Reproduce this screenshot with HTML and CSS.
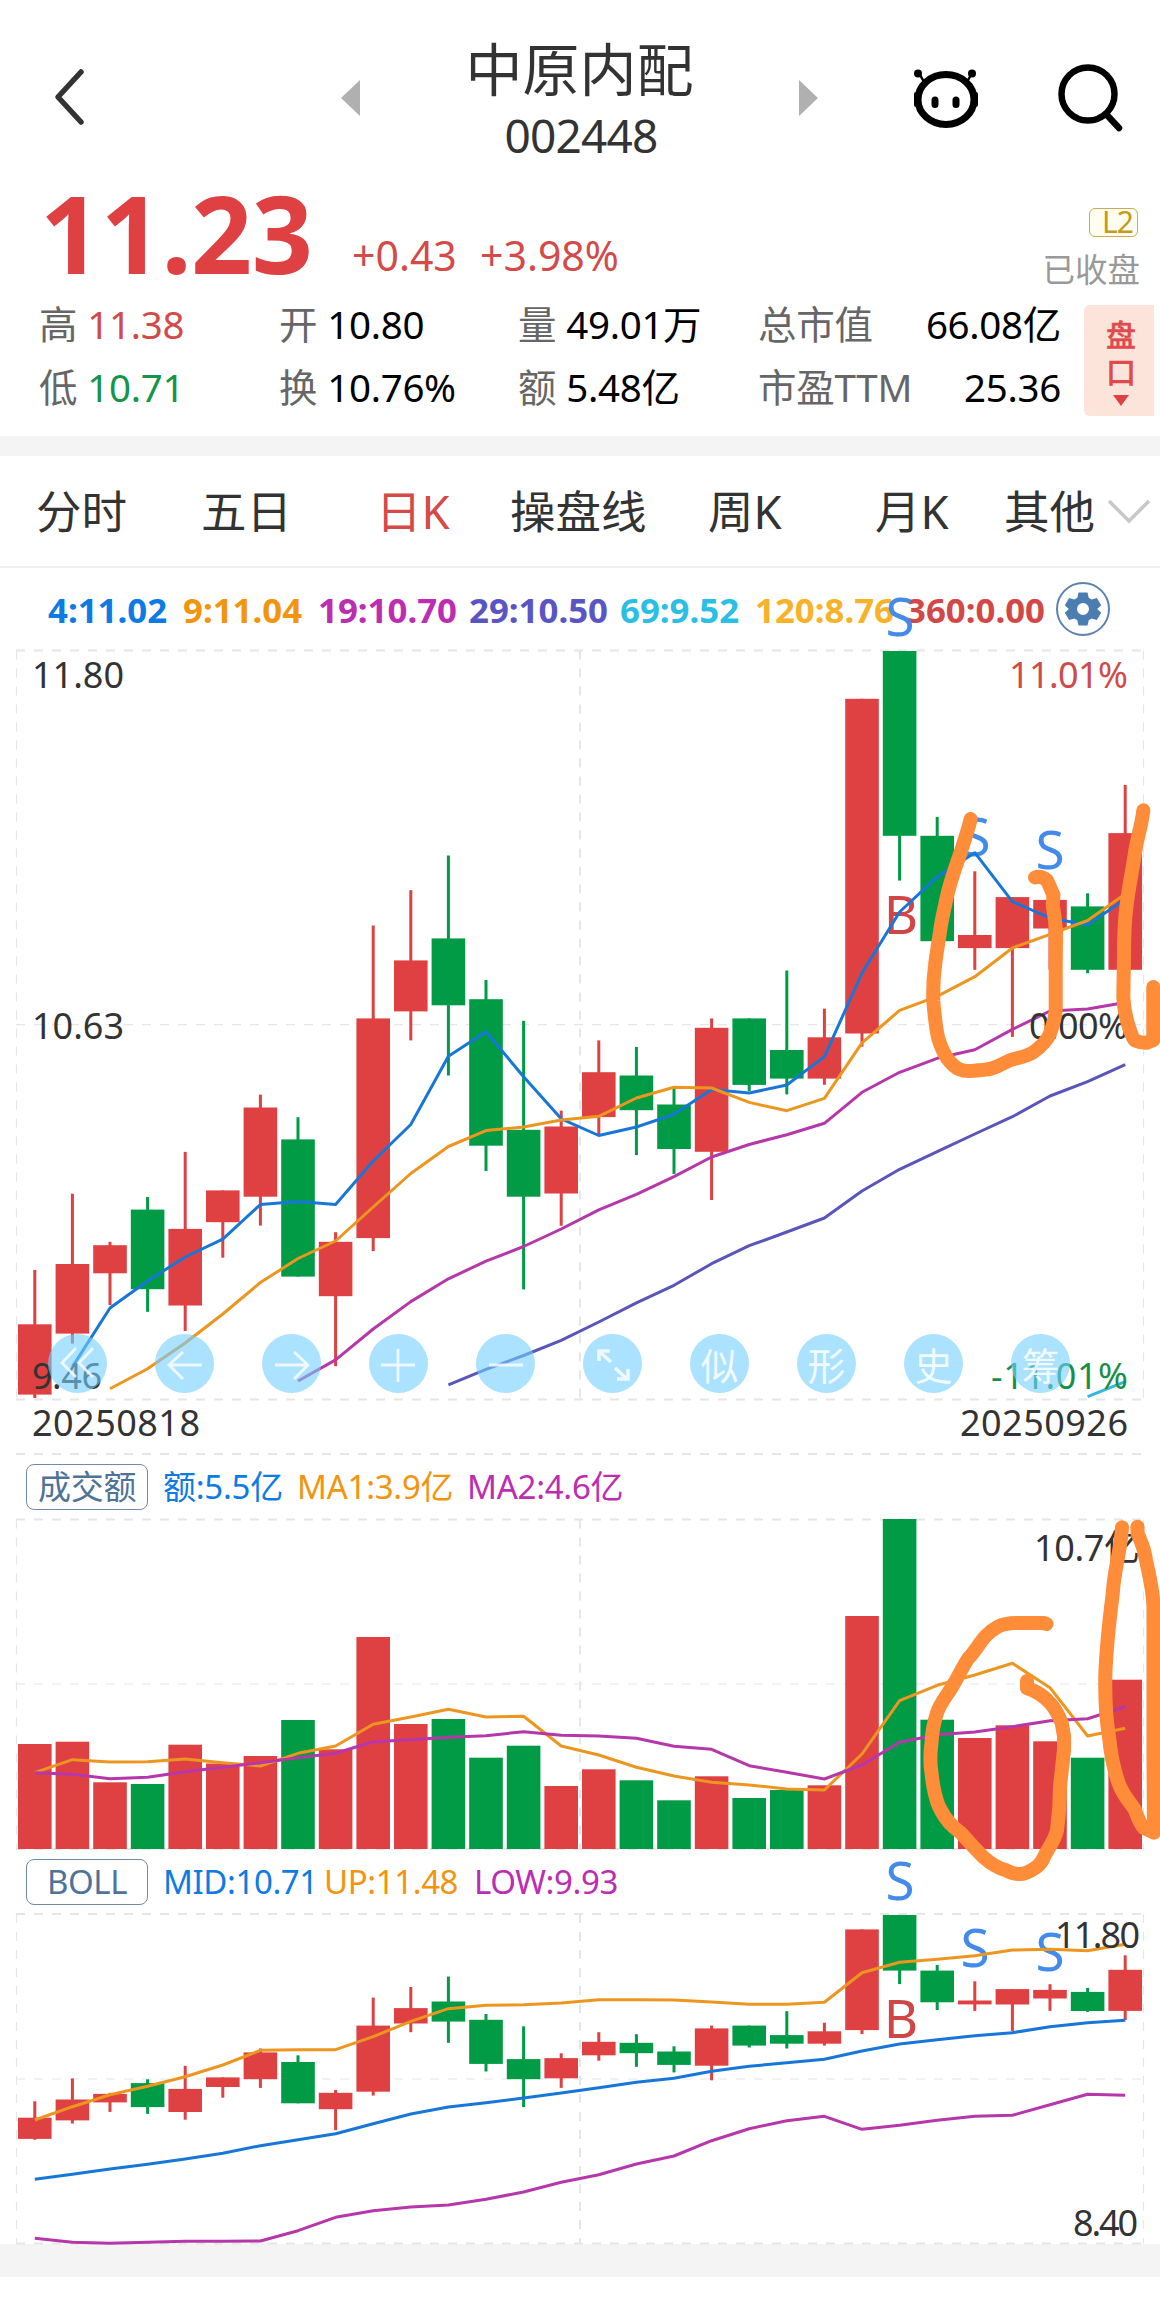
FILE: index.html
```html
<!DOCTYPE html>
<html lang="zh-CN">
<head>
<meta charset="utf-8">
<title>中原内配 002448</title>
<link rel="stylesheet" href="styles.css">
</head>
<body>
<main class="app">
  <header class="top">
    <svg class="back" viewBox="0 0 40 60"><path d="M31 6 8 31l23 25"/></svg>
    <svg class="tri prev" viewBox="0 0 20 38"><path d="M20 1v36L1 19z"/></svg>
    <div class="title"><h1>中原内配</h1><p>002448</p></div>
    <svg class="tri next" viewBox="0 0 20 38"><path d="M0 1v36l19-18z"/></svg>
    <svg class="robot" viewBox="0 0 70 64">
      <ellipse cx="35" cy="35.500" rx="28" ry="25"/>
      <path d="M8 9l5 9M61 9l-5 9"/>
      <path class="ears" d="M5 30v11M65 30v11"/>
      <circle class="solid" cx="7" cy="9.500" r="4"/><circle class="solid" cx="61" cy="9.500" r="4"/>
      <path class="eyes" d="M24 36v4.500M45 36v4.500"/>
    </svg>
    <svg class="search" viewBox="0 0 70 72"><circle cx="32" cy="31" r="26.500"/><path d="M50 51l13 14"/></svg>
  </header>

  <section class="quote">
    <div class="price-row">
      <strong class="price">11.23</strong>
      <span class="change">+0.43</span><span class="change">+3.98%</span>
      <div class="state"><span class="l2">L2</span><span class="closed">已收盘</span></div>
    </div>
    <div class="stats-row">
      <dl class="stats">
        <div><dt>高</dt><dd class="up">11.38</dd></div>
        <div><dt>开</dt><dd>10.80</dd></div>
        <div><dt>量</dt><dd>49.01万</dd></div>
        <div class="wide"><dt>总市值</dt><dd>66.08亿</dd></div>
        <div><dt>低</dt><dd class="down">10.71</dd></div>
        <div><dt>换</dt><dd>10.76%</dd></div>
        <div><dt>额</dt><dd>5.48亿</dd></div>
        <div class="wide"><dt>市盈TTM</dt><dd>25.36</dd></div>
      </dl>
      <div class="book"><span>盘</span><span>口</span><svg viewBox="0 0 16 11"><path d="M0 0h16L8 11z"/></svg></div>
    </div>
  </section>

  <div class="band"></div>

  <nav class="tabs">
    <a>分时</a><a>五日</a><a class="active">日K</a><a>操盘线</a><a>周K</a><a>月K</a><a>其他</a>
    <svg viewBox="0 0 44 28"><path d="M2 3l20 20L42 3"/></svg>
  </nav>

  <div class="ma">
    <span class="c-blue">4:11.02</span><span class="c-orange">9:11.04</span><span class="c-pink">19:10.70</span><span class="c-violet">29:10.50</span><span class="c-cyan">69:9.52</span><span class="c-yellow">120:8.76</span><span class="c-red">360:0.00</span>
    <svg class="gear" viewBox="0 0 56 56">
      <circle class="ring" cx="28" cy="28" r="26"/>
      <path fill-rule="evenodd" d="M23.500 11.500h9l1.200 5.300 3 1.700 5.200-1.600 4.300 7.400-4 3.700 4 3.700-4.300 7.400-5.200-1.600-3 1.700-1.200 5.300h-9l-1.200-5.300-3-1.700-5.200 1.600-4.300-7.400 4-3.700-4-3.700 4.300-7.400 5.200 1.600 3-1.700zM28 22a6 6 0 1 0 0 12 6 6 0 0 0 0-12z"/>
    </svg>
  </div>

  <section class="kline">
    <svg class="chart" id="kline" viewBox="0 650 1160 804"></svg>
    <nav class="tools">
      <button><svg viewBox="0 0 40 40"><path d="M18 4 4 19l14 14M35 4 21 19l14 14"/></svg></button>
      <button><svg viewBox="0 0 40 40"><path d="M18 8 4 21l14 14M4 21h33"/></svg></button>
      <button><svg viewBox="0 0 40 40"><path d="M22 8l14 13-14 14M36 21H3"/></svg></button>
      <button><svg viewBox="0 0 40 40"><path d="M19 5v33M2 21h34"/></svg></button>
      <button><svg viewBox="0 0 40 40"><path d="M3 21h34"/></svg></button>
      <button><svg class="bold" viewBox="0 0 40 40"><path d="M18 18 7 8M6 17V7h11M22 24l12 11M35 25v10H24"/></svg></button>
      <button>似</button><button>形</button><button>史</button><button>筹</button>
    </nav>
  </section>

  <div class="legend">
    <span class="tag">成交额</span><span class="c-blue w1">额:5.5亿</span><span class="c-orange w2">MA1:3.9亿</span><span class="c-pink">MA2:4.6亿</span>
  </div>
  <svg class="chart" id="volume" viewBox="0 1519 1160 330"></svg>

  <div class="legend boll">
    <span class="tag">BOLL</span><span class="c-blue b1">MID:10.71</span><span class="c-orange b2">UP:11.48</span><span class="c-pink">LOW:9.93</span>
  </div>
  <svg class="chart" id="boll" viewBox="0 1914 1160 330"></svg>
  <footer class="foot"></footer>

  <svg class="ink" viewBox="0 0 1160 2315">
    <path d="M970.700 819C967 834 962 848 958 860C952 877 949 887 946.700 897.500C943 915 941 922 940 932C938 945 936 956 935 966C933 980 933 990 933.300 1001C935 1020 936 1029 938.300 1038.700C941 1047 943 1052 946.700 1057.600C952 1065 956 1068 960 1069.600C966 1072 970 1071 974 1070.700C982 1070 988 1070 993 1068C1002 1065 1006 1061 1013 1059.300C1022 1057 1027 1056 1033 1052.400C1042 1046 1047 1041 1050 1033.500C1053 1025 1056 1016 1055.700 1007.700V966L1056 932C1055 920 1054 911 1052.700 906L1053.500 895C1050 888 1049 884 1046.700 880C1043 877 1039 876 1035 877.500"/>
    <path d="M1143.300 810.300C1142 824 1137 838 1135 852.700C1132 873 1129 886 1126.700 904.300C1124 924 1124 938 1124 956L1123.300 997.300C1124 1009 1126 1018 1128.300 1025C1131 1033 1132 1038 1135 1040.400C1139 1042 1143 1043 1146.700 1042.800L1153.300 1040V987"/>
    <path d="M1046.500 1624L1044 1623H1016.500C1008 1623 1003 1624 998 1626.700C990 1631 988 1634 985 1636.700C978 1645 974 1653 968.500 1658C962 1668 958 1677 953.700 1684C947 1696 940 1703 937 1713C933 1725 932 1732 931.500 1743C930 1754 930 1764 931.500 1773C933 1788 935 1797 939 1806.700C946 1821 953 1827 961 1833C970 1843 976 1850 983 1856.700C992 1865 998 1868 1005.500 1870C1012 1874 1016 1874 1020 1874C1027 1874 1032 1870 1037 1866.700C1043 1862 1043 1858 1046 1853C1052 1843 1056 1837 1057 1830C1059 1815 1060 1800 1060 1786.700L1064 1750V1736L1061.700 1723C1058 1714 1054 1707 1050 1703C1044 1696 1036 1691 1027 1688V1681"/>
    <path d="M1122 1527.300C1121 1550 1114 1570 1112.800 1593C1109 1623 1106 1650 1105.300 1676.700C1105 1698 1106 1719 1109 1736.700C1111 1757 1115 1774 1120 1786.700C1125 1798 1130 1802 1135 1810C1138 1819 1141 1825 1144 1828L1154 1832.700L1153.500 1760V1606.700C1153 1589 1149 1575 1146 1560C1144 1546 1140 1540 1137.500 1533V1526.700"/>
  </svg>
</main>
<script src="charts.js"></script>
</body>
</html>
```
FILE: styles.css
```css
* { box-sizing: border-box; }
body {
  margin: 0;
  background: #fff;
  color: #333;
  font-family: "Noto Sans", "Noto Sans CJK SC", sans-serif;
}
h1, p, dl, dd { margin: 0; font-weight: 400; }
svg { display: block; flex: none; }
.app { position: relative; width: 1160px; height: 2315px; overflow: hidden; }

.top { display: flex; align-items: flex-start; height: 180px; }
.back { width: 40px; height: 60px; margin: 66px 0 0 50px; fill: none; stroke: #333; stroke-width: 5.500; stroke-linecap: round; stroke-linejoin: round; }
.tri { width: 20px; height: 38px; margin-top: 79px; fill: #b0b0b0; }
.prev { margin-left: 250px; }
.title { width: 439px; padding-top: 36px; text-align: center; }
.title h1 { font-size: 57px; line-height: 66px; }
.title p { margin-top: 2px; font-size: 46px; line-height: 62px; letter-spacing: -.8px; text-indent: 3px; }
.robot { width: 70px; height: 64px; margin: 64px 0 0 92px; fill: none; stroke: #000; stroke-width: 7; }
.robot .solid { fill: #000; stroke: none; }
.robot path { stroke-width: 2.500; }
.robot .ears { stroke-width: 4; stroke-linecap: round; }
.robot .eyes { stroke-width: 7; stroke-linecap: round; }
.search { width: 70px; height: 72px; margin: 63px 0 0 75px; fill: none; stroke: #000; stroke-width: 6.500; stroke-linecap: round; }

.price-row { display: flex; height: 114px; padding-left: 40px; }
.price { width: 312px; margin-top: -2px; font-size: 107px; line-height: 110px; letter-spacing: -.5px; color: #df4143; }
.change { width: 128px; margin-top: 45px; font-size: 41px; line-height: 60px; color: #d34a48; }
.state { display: flex; flex-direction: column; align-items: flex-end; flex: 1; padding: 28px 20px 0 0; }
.l2 { width: 49px; height: 34px; margin-right: 2px; padding-right: 4px; border: 1.500px solid #c7ac50; border-radius: 6px; background: #fffdf0; font-size: 30px; line-height: 26px; letter-spacing: -1px; text-align: right; color: #c29a1c; }
.closed { margin-top: 9px; font-size: 32.500px; line-height: 48px; color: #999; }
.stats-row { display: flex; justify-content: space-between; height: 142px; padding: 0 6px 0 39px; }
.stats { display: grid; grid-template-columns: 240px 239px 240px 303px; grid-template-rows: 63px 63px; margin-top: -1px; font-size: 38.500px; line-height: 63px; letter-spacing: -.3px; color: #000; }
.stats div { display: flex; gap: 10px; }
.stats .wide { justify-content: space-between; }
.stats dt { color: #666; }
.stats .up { color: #d34a48; }
.stats .down { color: #14954a; }
.book { display: flex; flex-direction: column; align-items: center; width: 70px; height: 111px; margin-top: 11px; padding: 11px 0 0 4px; border-radius: 6px 0 0 6px; background: #fde4da; color: #df4b4b; font-size: 30px; font-weight: 500; line-height: 37px; -webkit-text-stroke: .4px #df4b4b; }
.book svg { width: 16px; height: 11px; margin-top: 5px; fill: #df4143; }

.band { height: 20px; background: #f4f4f4; }
.tabs { display: flex; height: 112px; padding-left: 36px; border-bottom: 2px solid #f0f0f0; font-size: 45.500px; line-height: 111px; }
.tabs a { width: 165px; white-space: nowrap; }
.tabs a:nth-child(2) { width: 175px; }
.tabs a:nth-child(3) { width: 134px; }
.tabs a:nth-child(4) { width: 198px; }
.tabs a:nth-child(5) { width: 167px; }
.tabs a:nth-child(6) { width: 129px; }
.tabs a:nth-child(7) { width: 103px; }
.tabs .active { color: #d34a48; }
.tabs svg { width: 44px; height: 28px; margin-top: 42px; fill: none; stroke: #c8c8cc; stroke-width: 3.500; }

.ma { display: flex; height: 82px; padding-left: 48px; font-size: 34.800px; font-weight: 700; line-height: 83px; }
.ma span { width: 135px; white-space: nowrap; }
.ma span:nth-child(3), .ma span:nth-child(4) { width: 151px; }
.ma span:nth-child(6) { width: 151px; }
.ma span:nth-child(7) { width: 149px; }
.gear { width: 56px; height: 56px; margin-top: 13px; fill: #4c7db2; }
.gear .ring { fill: none; stroke: #5c83ad; stroke-width: 2; }

.c-blue { color: #0d7be3; }
.c-orange { color: #f3940f; }
.c-pink { color: #bd2db1; }
.c-violet { color: #5a55c4; }
.c-cyan { color: #2bbfe5; }
.c-yellow { color: #f8b22a; }
.c-red { color: #d34747; }

.chart { width: 1160px; overflow: visible; }
.kline { position: relative; height: 804px; }
.tools { position: absolute; top: 684px; left: 48px; display: flex; gap: 48px; }
.tools button { display: flex; align-items: center; justify-content: center; width: 59px; height: 59px; padding: 0; border: 0; border-radius: 50%; background: rgba(115, 207, 255, .6); color: rgba(255, 255, 255, .85); font: 38px/59px "Noto Sans CJK SC", sans-serif; }
.tools svg { width: 40px; height: 40px; fill: none; stroke: rgba(255, 255, 255, .8); stroke-width: 2.800; }
.tools .bold { stroke-width: 3.500; }

.legend { display: flex; align-items: center; height: 65px; padding: 1px 0 0 26px; font-size: 33px; line-height: 46px; letter-spacing: -.25px; white-space: nowrap; }
.boll { letter-spacing: -.4px; }
.tag { width: 122px; height: 46px; margin-right: 15px; border: 1.500px solid #6f8ba6; border-radius: 8px; line-height: 43px; text-align: center; color: #4f7396; }
.w1 { width: 134px; }
.w2 { width: 170px; }
.b1 { width: 161px; }
.b2 { width: 150px; }
.foot { height: 33px; background: #f4f4f4; }

.grid { fill: none; stroke: #e6e6e6; stroke-width: 2; stroke-dasharray: 9 9; }
.thin { stroke-width: 1.200; }
.rise { fill: #df4143; }
.fall { fill: #029b45; }
.line { fill: none; stroke-width: 3; stroke-linejoin: round; }
.s-blue { stroke: #1777d8; }
.s-orange { stroke: #ed961f; }
.s-pink { stroke: #b637aa; }
.s-violet { stroke: #5856bb; }
.s-cyan { stroke: #35b8dc; }
.axis { font-size: 36px; fill: #333; }
.axis.up { fill: #cf4a4a; }
.axis.down { fill: #178f4a; }
.mark { font-size: 53px; text-anchor: middle; }
.sell { fill: #438bea; }
.buy { fill: #d04545; }
.ink { position: absolute; top: 0; left: 0; width: 1160px; height: 2315px; pointer-events: none; fill: none; stroke: #ff8c39; stroke-width: 14; stroke-linecap: round; stroke-linejoin: round; }
```
FILE: charts.js
```js
const X0 = 34.8, STEP = 37.6, BAR = 33.6;
const cx = i => X0 + i * STEP;

// high, body top, body bottom, low, direction (1 = rise)
const candles = [
  [1270,1324.3,1394.6,1398,1],[1193.7,1264,1333.6,1343.6,1],[1241.8,1245.2,1273.3,1305.1,1],
  [1197,1209.6,1289.2,1311.8,0],[1151.9,1228.9,1305.5,1331,1],[1190.4,1190.4,1222.2,1257.7,1],
  [1094.6,1107.5,1196.7,1225.6,1],[1117.2,1139.4,1276.6,1276.6,0],[1232.2,1241.8,1296.2,1366.2,1],
  [925.5,1018.4,1238.1,1251.1,1],[890.2,960.4,1011.4,1040.4,1],[855.5,938.4,1005.3,1075.5,0],
  [980,999.2,1145.7,1171,0],[1020.8,1129.8,1196.7,1289.4,0],[1110.6,1126.5,1193.5,1225.7,1],
  [1040.4,1072.2,1117.1,1135,1],[1046.9,1075.5,1110.2,1155.1,0],[1087.3,1104.5,1149,1173.9,0],
  [1018.4,1027.8,1151.8,1200,1],[1018.4,1018.4,1084.9,1091,0],[970.5,1050,1078.6,1094.4,0],
  [1008.7,1037.3,1078.6,1084.8,1],[698.8,698.8,1033.5,1046.6,1],[651,651,835.8,880.6,0],
  [816.9,835.8,941.2,966.6,0],[871.3,935,948.1,969.8,1],[897.1,897.1,948.1,1036.9,1],
  [881,899.9,928.5,969.8,1],[893.3,906.4,969.8,973.2,0],[784.9,833.1,969.8,1000,1]
];
const volumeTops = [1744,1741.7,1782.3,1784,1744.7,1763.5,1756,1720,1749.3,1637,1724,1719,1757.7,1745.7,1786,1769.3,1780.3,1800.3,1776.3,1798,1790,1785.3,1616,1519,1719.7,1738,1725.3,1741.3,1757.7,1679.7];

const lines = {
  ma4: [1366.9,1308,1281,1257,1239.2,1204.5,1201.5,1204.5,1161,1124.5,1056.3,1031.8,1076.7,1118.8,1135.5,1127,1114.3,1089.4,1093,1085,1056.6,973,912,876.8,852.7,901.6,918,925,899],
  ma9: [1388.7,1368.7,1343,1314,1282.5,1258.5,1241,1207,1173.5,1146.5,1130.6,1127,1120,1116.3,1098,1087.3,1088,1102.4,1110.7,1098.3,1042.8,1010.4,996.3,976.7,948,934.3,920.5,894],
  ma19: [1381,1359.9,1329,1301.6,1278.8,1261.2,1246.5,1229,1209.8,1194.3,1176.7,1157,1144.5,1134.7,1123.3,1092.3,1072.3,1058.3,1049.7,1029.4,1011,1009,1002.5],
  ma29: [1384.9,1369.4,1355.5,1340.4,1322,1302.9,1285.3,1263.7,1245.7,1232,1218,1191,1169.3,1151.7,1134,1116.7,1096,1081.7,1064.7],
  ma69: [1396.7,1381.7],
  vol1: [1772.7,1759.7,1762,1761.7,1759,1762.7,1766,1753.3,1746,1724.3,1717,1709.3,1717,1716.3,1746,1755,1767.3,1776,1782.3,1785,1789,1790,1754,1700.7,1685.3,1675,1663.3,1687.7,1736,1728.3],
  vol2: [1772.7,1774.3,1778.7,1777.3,1771.7,1767.3,1762.7,1757.7,1753.3,1741.7,1739.7,1737.3,1735.7,1731.7,1735.3,1736,1738.3,1746.3,1749.3,1765.7,1772.3,1779,1765,1742.3,1734.7,1732,1726.7,1720.7,1718.7,1706.7],
  up: [2120,2106.7,2094.7,2086.3,2076.7,2065,2050.3,2049.7,2049.7,2036.7,2021.3,2008.7,2005.3,2004.7,2003,1999.7,1999.7,2000,2002,2004.3,2004.3,2002.3,1972.7,1962.3,1959.3,1955.7,1950,1949.3,1950.7,1944.3],
  mid: [2179.3,2174.3,2169,2164.3,2159,2153.3,2145.7,2139.7,2133.7,2123.7,2114,2107,2102.7,2098,2093,2087.7,2082.3,2078.3,2071.3,2066.3,2062.7,2059.3,2051,2044,2039.7,2035.7,2032.7,2026.7,2022.7,2020.3],
  low: [2238.3,2242.3,2243.2,2242.3,2241.3,2241.3,2241,2230.7,2217.3,2210.7,2207,2205,2199.3,2192,2182.3,2174.7,2164,2156,2140.7,2128.7,2120.7,2116.3,2129.3,2125.3,2120.3,2116.3,2115.3,2104.7,2094.3,2095.3]
};

const rect = (x, y, w, h, up) =>
  `<rect class="${up ? 'rise' : 'fall'}" x="${x.toFixed(1)}" y="${y.toFixed(1)}" width="${w}" height="${h.toFixed(1)}"/>`;
const drawCandles = map => candles.map(([h, t, b, l, up], i) =>
  rect(cx(i) - 1.5, map(h), 3, map(l) - map(h), up) +
  rect(cx(i) - BAR / 2, map(t), BAR, map(b) - map(t), up)).join('');
const line = (key, color) => {
  const start = 30 - lines[key].length;
  return `<polyline class="line s-${color}" points="${lines[key].map((y, i) => cx(start + i).toFixed(1) + ',' + y).join(' ')}"/>`;
};
const grid = (top, mid, bottom) =>
  `<path class="grid" d="M16 ${top}H1144M16 ${bottom}H1144M580 ${top}V${bottom}"/>` +
  `<path class="grid thin" d="M16 ${mid}H1144M16.5 ${top}V${bottom}M1143.5 ${top}V${bottom}"/>`;
const label = (x, y, w, text, tone = '') =>
  `<text class="axis ${tone}" x="${x}" y="${y}" textLength="${w}">${text}</text>`;
const mark = (x, y, text) =>
  `<text class="mark ${text === 'S' ? 'sell' : 'buy'}" x="${x}" y="${y}">${text}</text>`;

document.getElementById('kline').innerHTML =
  grid(650.5, 1024.6, 1399.5) + '<path class="grid" d="M16 1454H1144"/>' +
  drawCandles(y => y) +
  mark(900, 636, 'S') + mark(976, 856, 'S') + mark(1050, 869, 'S') + mark(901, 933.5, 'B') +
  line('ma4', 'blue') + line('ma9', 'orange') + line('ma19', 'pink') + line('ma29', 'violet') + line('ma69', 'cyan') +
  label(32, 688, 92, '11.80') + label(1009, 688, 119, '11.01%', 'up') +
  label(32, 1039, 92, '10.63') + label(1029, 1038.5, 99, '0.00%') +
  label(32, 1389, 70, '9.46') + label(991, 1389, 137, '-11.01%', 'down') +
  label(32, 1436, 168, '20250818') + label(960, 1436, 168, '20250926');

document.getElementById('volume').innerHTML =
  grid(1519.5, 1684, 1849) +
  volumeTops.map((y, i) => rect(cx(i) - BAR / 2, y, BAR, 1849 - y, candles[i][4])).join('') +
  line('vol1', 'orange') + line('vol2', 'pink') + label(1034, 1560.5, 106, '10.7亿');

document.getElementById('boll').innerHTML =
  grid(1914, 2079, 2243.5) +
  drawCandles(y => 1915 + (y - 651) * 0.301) +
  mark(900, 1900, 'S') + mark(975, 1967, 'S') + mark(1050, 1971, 'S') + mark(901, 2037.5, 'B') +
  line('up', 'orange') + line('mid', 'blue') + line('low', 'pink') +
  label(1055, 1947.5, 85, '11.80') + label(1073, 2236, 65, '8.40');
```
